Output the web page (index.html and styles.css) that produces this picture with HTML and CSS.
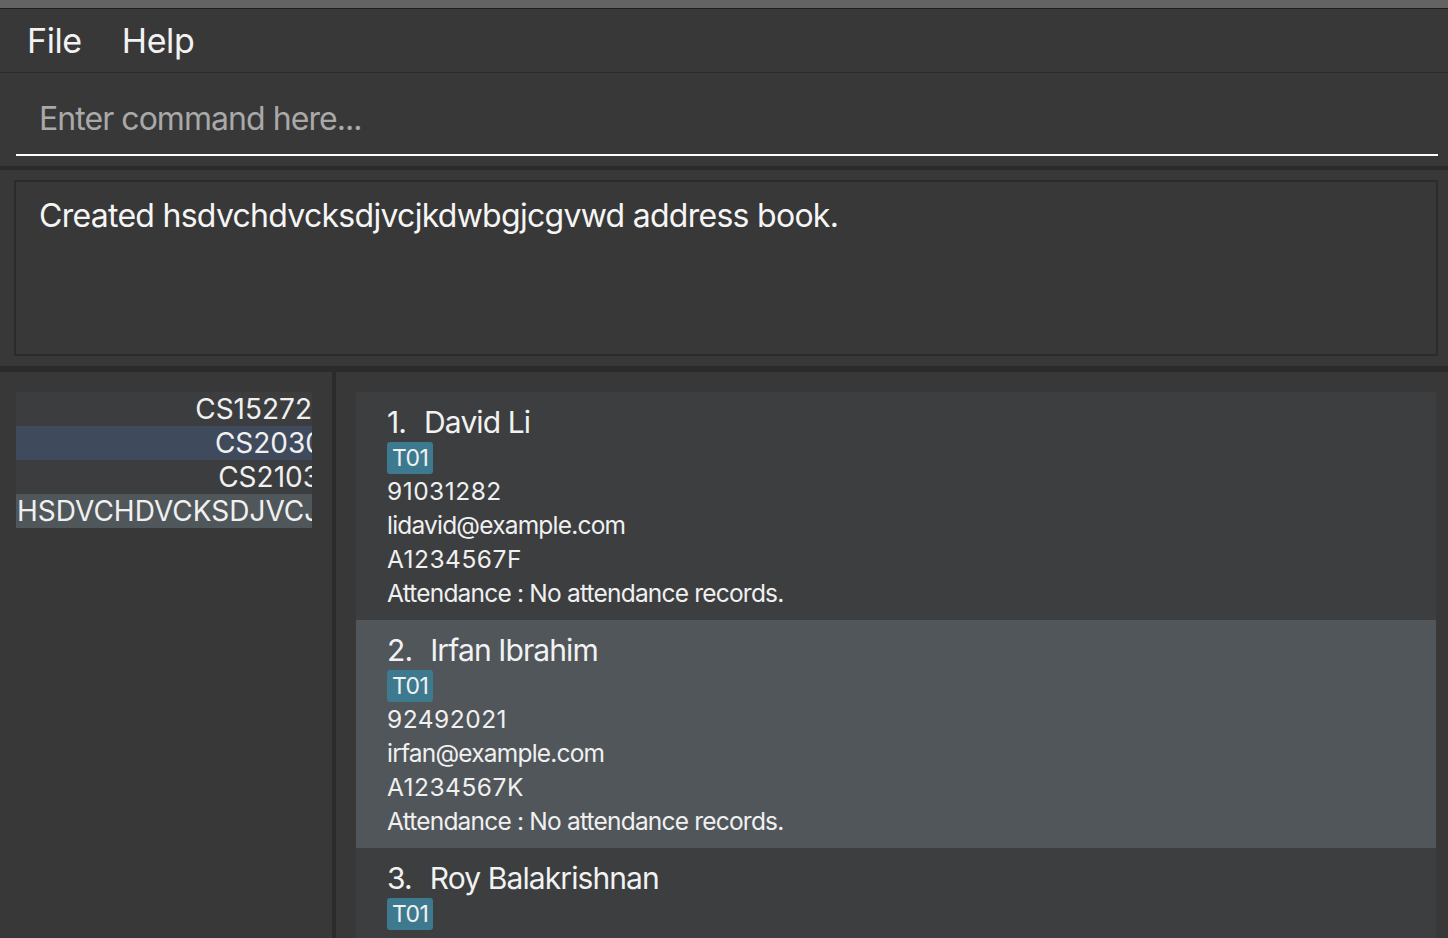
FILE: index.html
```html
<!DOCTYPE html>
<html>
<head>
<meta charset="utf-8">
<link rel="stylesheet" href="styles.css">
</head>
<body>
<div class="app">
  <div class="titlebar"></div>
  <div class="menubar">
    <span class="menu-item">File</span>
    <span class="menu-item">Help</span>
  </div>
  <div class="command">
    <div class="command-field">Enter command here...</div>
  </div>
  <div class="result">
    <div class="result-box">Created hsdvchdvcksdjvcjkdwbgjcgvwd address book.</div>
  </div>
  <div class="lower">
    <div class="left">
      <div class="tabs">
        <div class="tab"><span class="tab-text t1">CS15272</span></div>
        <div class="tab tab-selected"><span class="tab-text t2">CS2030</span></div>
        <div class="tab"><span class="tab-text t3">CS2103</span></div>
        <div class="tab tab-current"><span class="tab-text t4">HSDVCHDVCKSDJVCJKDWBGJCGVWD</span></div>
      </div>
    </div>
    <div class="divider"></div>
    <div class="right">
      <div class="cards">
        <div class="card">
          <div class="name"><span class="idx">1.</span>&nbsp;&nbsp;David Li</div>
          <div class="tags"><span class="tag">T01</span></div>
          <div class="line num">91031282</div>
          <div class="line">lidavid@example.com</div>
          <div class="line num">A1234567F</div>
          <div class="line">Attendance : No attendance records.</div>
        </div>
        <div class="card card-selected">
          <div class="name"><span class="idx">2.</span>&nbsp;&nbsp;Irfan Ibrahim</div>
          <div class="tags"><span class="tag">T01</span></div>
          <div class="line num">92492021</div>
          <div class="line">irfan@example.com</div>
          <div class="line num">A1234567K</div>
          <div class="line">Attendance : No attendance records.</div>
        </div>
        <div class="card">
          <div class="name"><span class="idx">3.</span>&nbsp;&nbsp;Roy Balakrishnan</div>
          <div class="tags"><span class="tag">T01</span></div>
          <div class="line num">92624417</div>
          <div class="line">royb@example.com</div>
          <div class="line num">A1234567X</div>
          <div class="line">Attendance : No attendance records.</div>
        </div>
      </div>
    </div>
  </div>
</div>
</body>
</html>
```
FILE: styles.css
```css
* { box-sizing: border-box; }
html, body {
  margin: 0;
  padding: 0;
  background: #383838;
  width: 1448px;
  height: 938px;
  overflow: hidden;
  font-family: Inter, "Open Sans", sans-serif;
  color: #f0f0f0;
}
.app {
  display: flex;
  flex-direction: column;
  height: 938px;
}
.titlebar {
  height: 9px;
  background: #636363;
  border-bottom: 1px solid #1c1c1c;
  flex: none;
}
.menubar {
  height: 64px;
  flex: none;
  display: flex;
  align-items: center;
  padding-left: 27px;
  gap: 40px;
  border-bottom: 1px solid #2b2b2b;
  font-size: 34px;
  letter-spacing: -0.4px;
  color: #f2f2f2;
}
.menu-item { line-height: 40px; }
.command {
  height: 93px;
  flex: none;
  padding: 14px 10px 0 16px;
}
.command-field {
  height: 69px;
  border-bottom: 2px solid #ffffff;
  padding-left: 23px;
  padding-top: 12px;
  font-size: 32px;
  line-height: 40px;
  color: #a9a9a9;
  letter-spacing: -0.95px;
}
.result {
  height: 200px;
  flex: none;
  border-top: 4px solid #2b2b2b;
  padding: 10px 10px 10px 14px;
}
.result-box {
  height: 176px;
  border: 2px solid #2b2b2b;
  padding: 14px 0 0 23px;
  font-size: 32px;
  line-height: 40px;
  color: #f5f5f5;
  letter-spacing: -0.72px;
}
.lower {
  flex: 1;
  display: flex;
  border-top: 6px solid #2b2b2b;
  min-height: 0;
}
.left {
  width: 332px;
  flex: none;
  padding: 20px 20px 0 16px;
}
.tabs {
  display: flex;
  flex-direction: column;
  background: #3b3d3f;
}
.tab {
  height: 34px;
  display: flex;
  justify-content: flex-end;
  overflow: hidden;
  white-space: nowrap;
  font-size: 28px;
  line-height: 34px;
  background: #3b3d3f;
  color: #f0f0f0;
}
.tab-selected { background: #3f4a5c; }
.tab-current { background: #50575a; justify-content: flex-start; }
.tab-text { flex: none; }
.t1 { margin-right: 0; }
.t2 { margin-right: -11px; }
.t3 { margin-right: -8px; }
.t4 { margin-left: 1px; }
.divider {
  width: 4px;
  flex: none;
  background: #2b2b2b;
}
.right {
  flex: 1;
  padding: 20px 12px 0 20px;
  overflow: hidden;
}
.cards {
  display: flex;
  flex-direction: column;
}
.card {
  height: 228px;
  flex: none;
  background: #3c3e40;
  padding: 13px 0 10px 31px;
}
.card-selected { background: #50565a; }
.name {
  font-size: 30px;
  line-height: 34px;
  color: #f2f2f2;
  letter-spacing: -0.9px;
}
.idx { margin-right: 3px; }
.tags {
  margin-top: 3px;
  height: 32px;
  display: flex;
}
.tag {
  background: #3d7a8f;
  border-radius: 3px;
  height: 32px;
  padding: 0 5px;
  font-size: 23px;
  line-height: 32px;
  letter-spacing: -0.5px;
  color: #f2f2f2;
}
.line {
  font-size: 24.5px;
  line-height: 34px;
  color: #f0f0f0;
  white-space: nowrap;
  letter-spacing: -0.8px;
}
.line.num { letter-spacing: 0.5px; }
```
